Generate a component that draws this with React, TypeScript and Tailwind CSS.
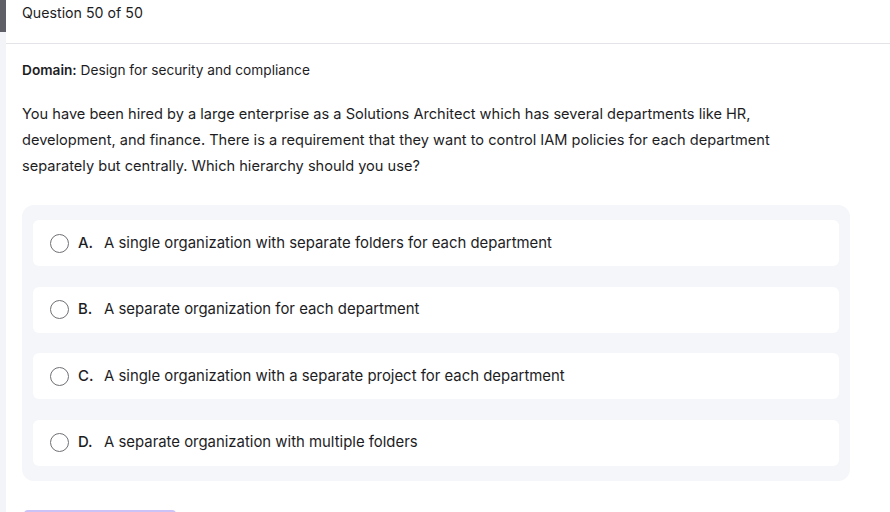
const options = [
    { key: 'A.', text: 'A single organization with separate folders for each department' },
    { key: 'B.', text: 'A separate organization for each department' },
    { key: 'C.', text: 'A single organization with a separate project for each department' },
    { key: 'D.', text: 'A separate organization with multiple folders' },
];

const App = () => {
    return (
        <div
            className="flex min-h-[512px] w-full bg-white text-[#1d1d1f]"
            style={{ fontFamily: 'Inter, "Noto Sans", sans-serif' }}
        >
            {/* left rail */}
            <div className="flex w-[6px] flex-col">
                <div className="h-[32px] bg-[#5f6067]" />
                <div className="flex-1 bg-[#f3f4f8]" />
            </div>

            <div className="flex-1">
                <div className="h-[44px] border-b border-[#e3e4e8] pl-[16px] pt-[1px] text-[14.2px] leading-6">
                    Question 50 of 50
                </div>

                <div className="pl-[16px] pr-[20px]">
                    <div className="mt-[14px] text-[13.7px] leading-6">
                        <span className="font-semibold">Domain:</span> Design for security and compliance
                    </div>

                    <p className="mt-[19px] text-[14.6px] leading-[26px]">
                        You have been hired by a large enterprise as a Solutions Architect which has several departments like HR,
                        <br />
                        development, and finance. There is a requirement that they want to control IAM policies for each department
                        <br />
                        separately but centrally. Which hierarchy should you use?
                    </p>

                    <div className="mt-[26px] flex w-[828px] flex-col gap-[20.5px] rounded-[12px] bg-[#f5f6fa] px-[11px] py-[15px]">
                        {options.map((o) => (
                            <div key={o.key} className="flex h-[46px] items-center rounded-[6px] bg-white pl-[17px] text-[14.9px]">
                                <span className="h-[19px] w-[19px] shrink-0 rounded-full border-[1.5px] border-[#6f7075]" />
                                <span className="ml-[9px] w-[26px] font-medium">{o.key}</span>
                                <span>{o.text}</span>
                            </div>
                        ))}
                    </div>

                    <div className="mt-[29px] ml-[2px] h-[20px] w-[152px] rounded-t-[4px] border-t-2 border-[#cbc3f5] bg-[#f4f2fe]" />
                </div>
            </div>
        </div>
    );
};

export default App;
